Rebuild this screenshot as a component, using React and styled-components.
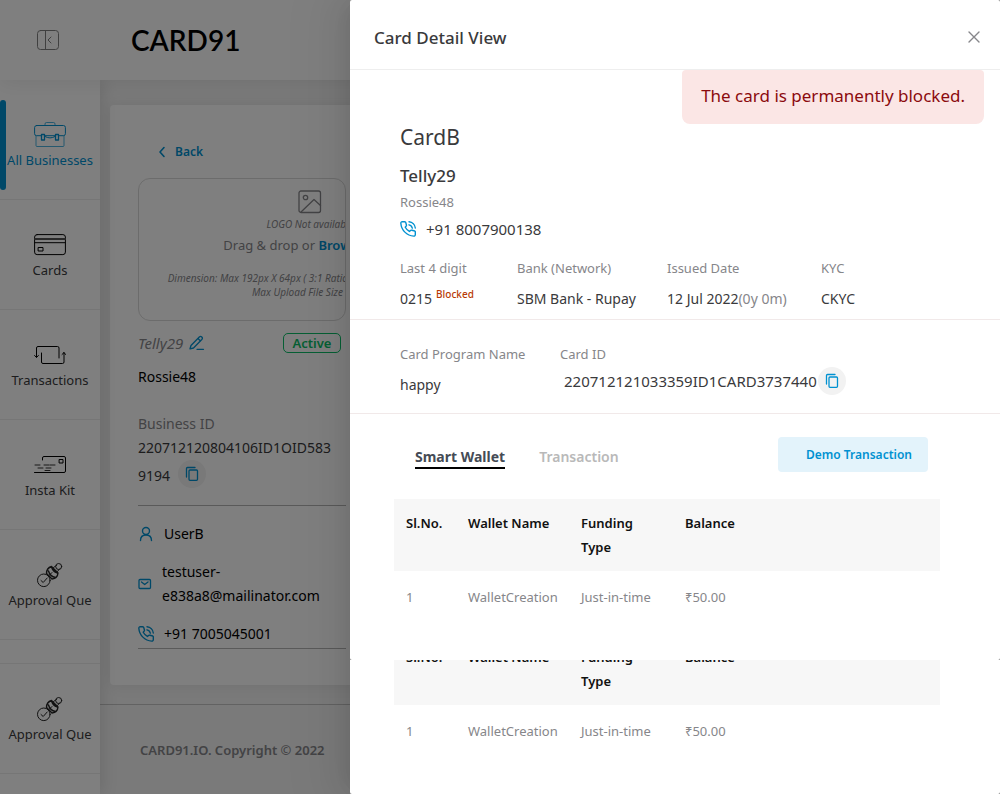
import React from "react";
import styled, { createGlobalStyle } from "styled-components";

const blue = "#0091d1";
const ink = "#3a3a3c";
const muted = "#86868a";

const GlobalStyle = createGlobalStyle`
  *, *::before, *::after { box-sizing: border-box; }
  body {
    margin: 0;
    font-family: "Noto Sans", "Open Sans", sans-serif;
    font-size: 13px;
    line-height: 24px;
    color: ${ink};
    background: #f4f4f4;
  }
  button { font: inherit; border: 0; padding: 0; background: none; cursor: pointer; }
  a { color: inherit; text-decoration: none; }
  p, h1, h2, h3, dl, dd, ul { margin: 0; padding: 0; }
`;

const Page = styled.div`
  position: relative;
  min-height: 100vh;
  display: flex;
  flex-direction: column;
  overflow: hidden;
`;
const TopBar = styled.header`
  position: relative;
  z-index: 2;
  height: 80px;
  padding-left: 37px;
  display: flex;
  align-items: center;
  gap: 72px;
  background: #fff;
  box-shadow: 0 2px 20px rgba(0, 0, 0, 0.08);
`;
const Brand = styled.span`
  font-family: Lato, sans-serif;
  font-size: 28px;
  font-weight: 600;
  line-height: 40px;
  color: #000;
`;
const IconButton = styled.button`
  display: flex;
  color: ${muted};
`;
const Shell = styled.div`
  flex: 1;
  display: flex;
`;
const Sidebar = styled.nav`
  flex: none;
  width: 100px;
  position: relative;
  z-index: 1;
  padding-top: 10px;
  background: #fff;
  box-shadow: 2px 0 16px rgba(0, 0, 0, 0.12);
`;
const NavItem = styled.a`
  position: relative;
  height: 110px;
  padding-top: 30px;
  display: flex;
  flex-direction: column;
  align-items: center;
  white-space: nowrap;
  line-height: 20px;
  color: ${(p) => (p.$active ? blue : ink)};
  border-bottom: 1px solid #ececec;
  svg { height: 30px; }
  &::before {
    content: "";
    display: ${(p) => (p.$active ? "block" : "none")};
    position: absolute;
    left: 0;
    top: 10px;
    width: 6px;
    height: 90px;
    border-radius: 3px;
    background: ${blue};
  }
`;
const NavGap = styled.div`
  height: 24px;
  border-bottom: 1px solid #ececec;
`;
const Main = styled.main`
  flex: 1;
  min-width: 0;
  padding-top: 25px;
`;
const BusinessCard = styled.section`
  margin-left: 10px;
  height: 580px;
  padding: 35px 28px 0;
  background: #fff;
  border-radius: 4px;
  box-shadow: 0 0 16px rgba(0, 0, 0, 0.08);
`;
const Profile = styled.div`
  width: 208px;
`;
const BackLink = styled.a`
  display: flex;
  align-items: center;
  gap: 9px;
  padding-left: 20px;
  margin-bottom: 14px;
  color: ${blue};
  font-size: 12px;
  font-weight: 600;
`;
const DropZone = styled.div`
  height: 143px;
  overflow: hidden;
  border: 1px solid #d9d9d9;
  border-radius: 12px;
`;
const DropInner = styled.div`
  width: 342px;
  padding-top: 10px;
  display: flex;
  flex-direction: column;
  align-items: center;
  color: ${muted};
  white-space: nowrap;
`;
const Note = styled.em`
  font-size: 10px;
  line-height: ${(p) => (p.$tall ? "18px" : "14px")};
`;
const DropText = styled.p`
  margin-bottom: 14px;
`;
const Browse = styled.button`
  color: ${blue};
  font-weight: 600;
`;
const NameRow = styled.div`
  margin-top: 10px;
  display: flex;
  align-items: center;
  gap: 6px;
  font-size: 15px;
  color: ${muted};
`;
const Status = styled.span`
  margin: 0 5px 0 auto;
  width: 58px;
  height: 20px;
  border: 1px solid #0cbf68;
  border-radius: 5px;
  text-align: center;
  line-height: 18px;
  font-size: 13px;
  font-weight: 600;
  color: #0cbf68;
`;
const Owner = styled.p`
  margin-top: 10px;
  color: #000;
  font-size: 14px;
`;
const FieldLabel = styled.p`
  margin-top: 23px;
  font-size: 14px;
  color: ${muted};
`;
const BusinessId = styled.p`
  height: 70px;
  padding-right: 8px;
  font-size: 14px;
  word-break: break-all;
  border-bottom: 1px solid #b4b4b4;
`;
const CopyButton = styled.button`
  width: 28px;
  height: 28px;
  margin-left: ${(p) => p.$gap || 0}px;
  display: inline-flex;
  align-items: center;
  justify-content: center;
  vertical-align: -1px;
  border-radius: 50%;
  background: #f2f2f2;
  color: ${blue};
`;
const Contacts = styled.ul`
  list-style: none;
  padding: 16px 0 2px;
  display: flex;
  flex-direction: column;
  gap: 14px;
  border-bottom: 1px solid #b4b4b4;
  font-size: 14px;
  color: #000;
`;
const Contact = styled.li`
  display: flex;
  align-items: center;
  gap: 10px;
  svg { flex: none; color: ${blue}; }
`;
const Footer = styled.footer`
  margin-top: 19px;
  padding: 33px 40px 24px;
  border-top: 1px solid #c4c4c4;
  color: ${muted};
  font-weight: 600;
`;

const Mask = styled.div`
  position: absolute;
  inset: 0;
  z-index: 3;
  background: rgba(0, 0, 0, 0.5);
`;
const Drawer = styled.aside`
  position: absolute;
  z-index: 4;
  top: 0;
  right: 0;
  width: 65%;
  min-height: 100%;
  display: flex;
  flex-direction: column;
  box-shadow: -6px 0 16px -8px rgba(0, 0, 0, 0.08), -9px 0 28px rgba(0, 0, 0, 0.06), -12px 0 48px 16px rgba(0, 0, 0, 0.04);
`;
const Panel = styled.div`
  height: 660px;
  background: #fff;
  border-radius: 2px;
`;
const TailPanel = styled.div`
  height: 134px;
  flex: none;
  overflow: hidden;
  display: flex;
  flex-direction: column;
  justify-content: flex-end;
  background: #fff;
  border-radius: 0 0 2px 2px;
`;
const DrawerHead = styled.div`
  height: 70px;
  padding: 6px 19px 0 24px;
  display: flex;
  align-items: center;
  justify-content: space-between;
  border-bottom: 1px solid #eee;
`;
const Title = styled.h1`
  font-size: 17px;
  font-weight: 500;
`;
const Alert = styled.p`
  width: fit-content;
  margin: 0 16px 0 auto;
  padding: 14px 19px 16px;
  border-radius: 4px 4px 8px 8px;
  background: #fbe6e5;
  color: #8b0a0e;
  font-size: 17px;
`;
const Section = styled.section`
  padding: ${(p) => p.$pad};
  border-bottom: 1px solid #f1e9e9;
`;
const CardName = styled.h2`
  font-size: 21px;
  font-weight: 400;
`;
const Holder = styled.h3`
  margin-top: 15px;
  font-size: 17px;
  font-weight: 500;
`;
const Muted = styled.span`
  color: ${muted};
`;
const Company = styled.p`
  margin-top: 2px;
  font-size: 13px;
  color: ${muted};
`;
const Phone = styled.p`
  margin-top: 3px;
  display: flex;
  align-items: center;
  gap: 10px;
  font-size: 15px;
  svg { color: ${blue}; }
`;
const Facts = styled.dl`
  display: grid;
  grid-template-columns: ${(p) => p.$cols};
  column-gap: 30px;
  margin-top: ${(p) => p.$top || 0}px;
`;
const Fact = styled.div`
  white-space: nowrap;
  font-size: 14px;
  dt { color: ${muted}; margin-bottom: 7px; font-size: 13px; }
`;
const CardId = styled.dd`
  display: flex;
  align-items: center;
  gap: 1px;
  margin-top: -6px;
  padding-left: 4px;
  font-size: 15px;
`;
const Blocked = styled.span`
  margin-left: 4px;
  font-size: 10px;
  vertical-align: 6px;
  line-height: 10px;
  font-weight: 500;
  color: #b93a05;
`;
const Tabs = styled.div`
  display: flex;
  align-items: center;
  padding: 23px 72px 27px 65px;
  gap: 34px;
`;
const Tab = styled.button`
  height: 22px;
  line-height: 18px;
  margin-top: 6px;
  font-size: 14px;
  font-weight: ${(p) => (p.$on ? 700 : 600)};
  color: ${(p) => (p.$on ? "#454b55" : "#b9b9b9")};
  border-bottom: 2px solid ${(p) => (p.$on ? "#000" : "transparent")};
`;
const DemoButton = styled.button`
  margin-left: auto;
  width: 150px;
  height: 35px;
  padding-left: 12px;
  border-radius: 4px;
  background: #e3f3fb;
  color: ${blue};
  font-size: 12px;
  font-weight: 600;
`;
const TableWrap = styled.div`
  padding: 0 60px 0 44px;
`;
const WalletTable = styled.table`
  width: 100%;
  table-layout: fixed;
  border-collapse: collapse;
  th, td { padding: 12px; text-align: left; vertical-align: top; }
  th { background: #f7f7f7; color: #111; font-weight: 600; }
  td { padding: 14px 12px 51px; color: ${muted}; white-space: nowrap; }
`;

const stroke = { fill: "none", stroke: "currentColor", strokeLinecap: "round", strokeLinejoin: "round" };

const CollapseIcon = () => (
  <svg width="22" height="20" viewBox="0 0 22 20" {...stroke} stroke="#808080">
    <rect x="0.5" y="0.5" width="21" height="19" rx="3" />
    <path d="M8.5 0.5v19M14 7l-3 3 3 3" />
  </svg>
);
const BriefcaseIcon = () => (
  <svg width="32" viewBox="0 0 32 30" {...stroke}>
    <rect x="0.6" y="5.500" width="30.8" height="10.2" rx="2" />
    <path d="M2 16v9.500q0 1 1 1h26q1 0 1-1V16" opacity="0.7" />
    <path d="M11 5.500V4q0-1.500 1.500-1.500h7q1.500 0 1.500 1.500v1.500" opacity="0.7" />
    <path d="M11 16.500q5 3 10 0" />
    <path d="M7.500 14.500h3v5.500h-3zM21.500 14.500h3v5.500h-3z" strokeWidth="1.300" fill="#fff" />
  </svg>
);
const CardIcon = () => (
  <svg width="32" viewBox="0 0 32 30" {...stroke}>
    <rect x="0.600" y="4.600" width="30.800" height="20" rx="2.500" stroke="#000" />
    <path d="M1 9h30" strokeWidth="2" stroke="#555" />
    <path d="M1 12.700h30M4.500 17.500h4.500v3.500H4.500z" stroke="#000" />
  </svg>
);
const TransferIcon = () => (
  <svg width="32" viewBox="0 0 32 30" {...stroke} stroke="#000">
    <path d="M2.500 17V8q0-1.500 1.500-1.500h19.500q1.500 0 1.500 1.500v10M7.500 13v9q0 1.500 1.500 1.500h19.500q1.500 0 1.500-1.500v-9.500" />
    <path d="M0.600 15.500l1.900 2 1.900-2M28 14.500l2-2 1.600 2" />
  </svg>
);
const KitIcon = () => (
  <svg width="32" viewBox="0 0 32 30" {...stroke} stroke="#000">
    <path d="M8.500 10V8q0-1.500 1.500-1.500h20q1.500 0 1.500 1.500v13q0 1.500-1.500 1.500H0.500M25.500 9.500h3.500v3.500h-3.500z" />
    <path d="M1 15h6M10 15h12M4 18h5M12 18h6M11 20.500h6" stroke="#333" strokeDasharray="5 1" />
  </svg>
);
const StampIcon = () => (
  <svg width="32" viewBox="0 0 32 30" {...stroke} stroke="#222">
    <circle cx="9.800" cy="20.300" r="6.300" />
    <path d="M7 20.500l2.200 2 4-4.500" />
    <circle cx="24.700" cy="6.500" r="3" />
    <path d="M12.500 13.500q0-5.500 5-7l6.500 6.500q-.5 5.500-6 6zM14.500 11q1.500 5.500 7 6.500M17.500 6.500q1 5 6 6.500" strokeWidth="1.400" />
    <path d="M19.500 7.500l3-2M23.500 11.500l2-2.500M15 15.500l3-3" />
  </svg>
);
const ChevronLeft = () => (
  <svg width="8" height="12" viewBox="0 0 8 12" {...stroke} strokeWidth="1.600"><path d="M6 1.500L2 6l4 4.500" /></svg>
);
const ImageIcon = () => (
  <svg width="24" height="26" viewBox="0 0 24 26" {...stroke} strokeWidth="1.300">
    <rect x="1" y="2" width="21.500" height="21.500" rx="2" />
    <circle cx="7.500" cy="8.500" r="2.200" />
    <path d="M3 23L16 10.500l6.500 6" />
  </svg>
);
const EditIcon = () => (
  <svg width="16" height="16" viewBox="0 0 16 16" {...stroke} stroke={blue} strokeWidth="1.300">
    <path d="M2 10.500L10.300 2q1.300-1.200 2.500 0t0 2.500L4.500 13l-3.500.800zM9 3.500l2.500 2.500M8 14.300h6.500" />
  </svg>
);
const CopyIcon = () => (
  <svg width="14" height="16" viewBox="0 0 14 16" {...stroke} strokeWidth="1.300">
    <path d="M1.500 11V2.500q0-1 1-1H10" />
    <rect x="4" y="4" width="8.500" height="10.300" rx="1" />
  </svg>
);
const PersonIcon = () => (
  <svg width="16" height="16" viewBox="0 0 16 16" {...stroke} strokeWidth="1.400">
    <circle cx="8" cy="5" r="3.500" />
    <path d="M2.500 14.500q0-5.500 5.500-5.500t5.500 5.500" />
  </svg>
);
const MailIcon = () => (
  <svg width="14" height="12" viewBox="0 0 14 12" {...stroke} strokeWidth="1.300">
    <rect x="1" y="1.500" width="11.500" height="9" rx="1" />
    <path d="M3.500 4l3.200 2.500L10 4" />
  </svg>
);
const PhoneIcon = () => (
  <svg width="16" height="16" viewBox="0.500 0.500 23 23" {...stroke} strokeWidth="2">
    <path d="M22.500 17v3.300a2 2 0 0 1-2.200 2A20 20 0 0 1 1.700 3.700 2 2 0 0 1 3.700 1.500H7a2 2 0 0 1 2 1.700c.1 1 .4 1.900.7 2.800a2 2 0 0 1-.5 2.100L8 9.500a16 16 0 0 0 6 6l1.400-1.200a2 2 0 0 1 2.100-.5c.9.300 1.900.6 2.800.7a2 2 0 0 1 2.200 2.500zM13.500 1.500a10 10 0 0 1 9 9M13.500 6a6 6 0 0 1 4.700 4.700" />
  </svg>
);
const CloseIcon = () => (
  <svg width="14" height="14" viewBox="0 0 14 14" {...stroke} strokeWidth="1.400"><path d="M2 1l10 10M12 1L2 11" /></svg>
);

const navItems = [
  ["All Businesses", BriefcaseIcon],
  ["Cards", CardIcon],
  ["Transactions", TransferIcon],
  ["Insta Kit", KitIcon],
  ["Approval Que", StampIcon],
];

function NavEntry({ label, Icon, active }) {
  return (
    <NavItem href="#" $active={active}>
      <Icon />
      {label}
    </NavItem>
  );
}

function Wallets() {
  return (
    <TableWrap>
      <WalletTable>
        <colgroup>
          <col width="62" /><col width="113" /><col width="104" /><col width="104" /><col />
        </colgroup>
        <thead>
          <tr><th>Sl.No.</th><th>Wallet Name</th><th>Funding Type</th><th>Balance</th><th aria-label="Actions" /></tr>
        </thead>
        <tbody>
          <tr><td>1</td><td>WalletCreation</td><td>Just-in-time</td><td>₹50.00</td><td /></tr>
        </tbody>
      </WalletTable>
    </TableWrap>
  );
}

export default function App() {
  return (
    <Page>
      <GlobalStyle />
      <TopBar>
        <IconButton aria-label="Collapse menu"><CollapseIcon /></IconButton>
        <Brand>CARD91</Brand>
      </TopBar>
      <Shell>
        <Sidebar>
          {navItems.map(([label, Icon], i) => (
            <NavEntry key={label} label={label} Icon={Icon} active={i === 0} />
          ))}
          <NavGap />
          <NavEntry label="Approval Que" Icon={StampIcon} />
        </Sidebar>
        <Main>
          <BusinessCard>
            <Profile>
              <BackLink href="#"><ChevronLeft />Back</BackLink>
              <DropZone>
                <DropInner>
                  <ImageIcon />
                  <Note $tall>LOGO Not available</Note>
                  <DropText>Drag &amp; drop or <Browse>Browse Files</Browse></DropText>
                  <Note>Dimension: Max 192px X 64px ( 3:1 Ratio ) PNG, JPG or JPEG only</Note>
                  <Note>Max Upload File Size 2 MB</Note>
                </DropInner>
              </DropZone>
              <NameRow>
                <em>Telly29</em>
                <IconButton aria-label="Edit name"><EditIcon /></IconButton>
                <Status>Active</Status>
              </NameRow>
              <Owner>Rossie48</Owner>
              <FieldLabel>Business ID</FieldLabel>
              <BusinessId>
                220712120804106ID1OID5839194
                <CopyButton $gap={8} aria-label="Copy business ID"><CopyIcon /></CopyButton>
              </BusinessId>
              <Contacts>
                <Contact><PersonIcon />UserB</Contact>
                <Contact><MailIcon /><span>testuser-<br />e838a8@mailinator.com</span></Contact>
                <Contact><PhoneIcon />+91 7005045001</Contact>
              </Contacts>
            </Profile>
          </BusinessCard>
          <Footer>CARD91.IO. Copyright © 2022</Footer>
        </Main>
      </Shell>
      <Mask />
      <Drawer>
        <Panel>
          <DrawerHead>
            <Title>Card Detail View</Title>
            <IconButton aria-label="Close"><CloseIcon /></IconButton>
          </DrawerHead>
          <Alert>The card is permanently blocked.</Alert>
          <Section $pad="1px 50px 8px">
            <CardName>CardB</CardName>
            <Holder>Telly29</Holder>
            <Company>Rossie48</Company>
            <Phone><PhoneIcon />+91 8007900138</Phone>
            <Facts $top={15} $cols="87px 120px 124px auto">
              <Fact><dt>Last 4 digit</dt><dd>0215<Blocked>Blocked</Blocked></dd></Fact>
              <Fact><dt>Bank (Network)</dt><dd>SBM Bank - Rupay</dd></Fact>
              <Fact><dt>Issued Date</dt><dd>12 Jul 2022<Muted>(0y 0m)</Muted></dd></Fact>
              <Fact><dt>KYC</dt><dd>CKYC</dd></Fact>
            </Facts>
          </Section>
          <Section $pad="22px 50px 16px">
            <Facts $cols="130px auto">
              <Fact><dt>Card Program Name</dt><dd>happy</dd></Fact>
              <Fact>
                <dt>Card ID</dt>
                <CardId>220712121033359ID1CARD3737440<CopyButton aria-label="Copy card ID"><CopyIcon /></CopyButton></CardId>
              </Fact>
            </Facts>
          </Section>
          <Tabs role="tablist">
            <Tab role="tab" aria-selected="true" $on>Smart Wallet</Tab>
            <Tab role="tab" aria-selected="false">Transaction</Tab>
            <DemoButton>Demo Transaction</DemoButton>
          </Tabs>
          <Wallets />
        </Panel>
        <TailPanel>
          <Wallets />
        </TailPanel>
      </Drawer>
    </Page>
  );
}
